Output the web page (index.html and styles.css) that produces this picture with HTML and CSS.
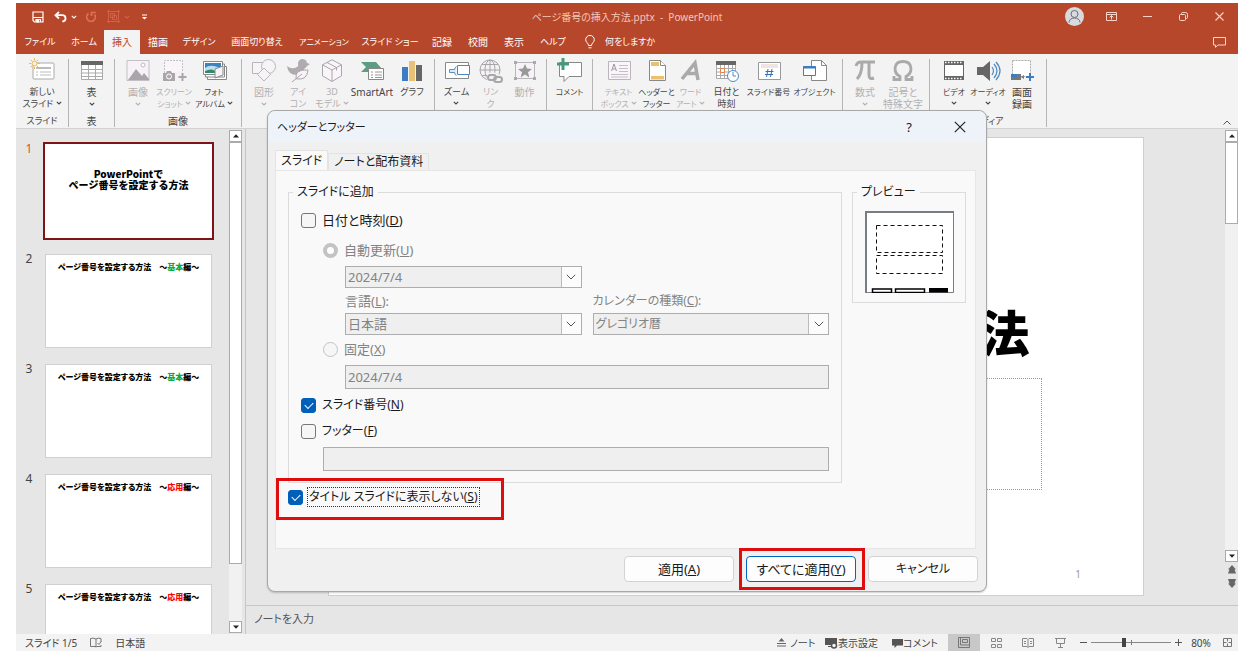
FILE: index.html
```html
<!DOCTYPE html>
<html lang="ja">
<head>
<meta charset="utf-8">
<title>ページ番号の挿入方法.pptx - PowerPoint</title>
<link rel="stylesheet" href="styles.css">
</head>
<body>
<svg class="defs" aria-hidden="true">
  <symbol id="chev" viewBox="0 0 6 4"><path d="M.8.8 3 3 5.2.8" fill="none" stroke="currentColor" stroke-width="1.1"/></symbol>
  <symbol id="drop" viewBox="0 0 10 6"><path d="M.8.8 5 5 9.200.8" fill="none" stroke="currentColor"/></symbol>
  <symbol id="up" viewBox="0 0 6 4"><path d="M0 3.500 3 .3l3 3.200z" fill="currentColor"/></symbol>
  <symbol id="down" viewBox="0 0 6 4"><path d="M0 .5 3 3.700 6 .5z" fill="currentColor"/></symbol>
</svg>
<div class="app">
  <header class="titlebar">
    <div class="quick">
      <button aria-label="上書き保存"><svg width="12" height="12" viewBox="0 0 12 12" fill="none" stroke="#fff" stroke-width="1.2"><path d="M1 1h10v10H2.500L1 9.500z"/><path d="M1 6.500h10M4 11V8.500h4.500V11" /><path d="M5 9h1.500v2H5z" fill="#fff"/></svg></button>
      <button aria-label="元に戻す"><svg width="13" height="12" viewBox="0 0 13 12" fill="none" stroke="#fff" stroke-width="1.800"><path d="M5 1 1.500 4.200 5 7.500M2 4.200h6.200c4.400 0 4.400 5.800.2 6.300"/></svg></button>
      <svg class="chev q-chev" width="6" height="4"><use href="#chev"/></svg>
      <button aria-label="繰り返し"><svg width="12" height="12" viewBox="0 0 12 12" fill="none" stroke="#e0705a" stroke-width="1.700"><path d="M3.500 2.500A4.300 4.300 0 1 0 9.500 3.500M6.500 5V1.500H10.800"/></svg></button>
      <button aria-label="グループ化"><svg width="13" height="13" viewBox="0 0 13 13" fill="none" stroke="#d4604a"><path d="M3.500 3.500h4v4h-4zM5.500 5.500h4v4h-4z"/><path d="M1.500 0v13M11.500 0v13M0 1.500h13M0 11.500h13"/></svg></button>
      <svg class="chev q-dim" width="6" height="4"><use href="#chev"/></svg>
      <button aria-label="クイック アクセス ツール バーのユーザー設定"><svg width="5" height="6" viewBox="0 0 5 6"><path d="M0 .5h5v1H0zM0 3h5L2.500 5.500z" fill="#fff"/></svg></button>
    </div>
    <h1 class="doc-title">ページ番号の挿入方法.pptx&nbsp; -&nbsp; PowerPoint</h1>
    <div class="window-btns">
      <span class="avatar"><svg width="19" height="19" viewBox="0 0 19 19" fill="none" stroke="#666d78"><circle cx="9.500" cy="9.500" r="9.500" fill="#d9dadd" stroke="none"/><circle cx="9.500" cy="7" r="3.500"/><path d="M4 15.500c0-6 11-6 11 0"/></svg></span>
      <button aria-label="リボンの表示オプション"><svg width="11" height="9" viewBox="0 0 11 9" fill="none" stroke="#fbd3c8"><path d="M.5.5h10v8H.5zM.5 2.500h10M5.500 7.500v-4M3.500 5.500l2-2 2 2"/></svg></button>
      <button aria-label="最小化"><svg width="9" height="9" viewBox="0 0 9 9" stroke="#fbd3c8"><path d="M0 4.500h9"/></svg></button>
      <button aria-label="元のサイズに戻す"><svg width="9" height="9" viewBox="0 0 9 9" fill="none" stroke="#fbd3c8"><rect x=".5" y="2.500" width="6" height="6" rx="1"/><path d="M2.500 2.500V1.500q0-1 1-1h3q2 0 2 2v3q0 1-1 1h-1"/></svg></button>
      <button aria-label="閉じる"><svg width="9" height="9" viewBox="0 0 9 9" stroke="#fbd3c8" stroke-width="1.100"><path d="M.5.5l8 8M8.500.5l-8 8"/></svg></button>
    </div>
  </header>
  <nav class="tabs">
    <button class="w48 kana">ファイル</button><button class="w40 kana">ホーム</button><button class="w36 active">挿入</button><button class="w36">描画</button><button class="w46 kana">デザイン</button><button class="w70 kana">画面切り替え</button><button class="w64 compact">アニメーション</button><button class="w68 compact">スライド ショー</button><button class="w36">記録</button><button class="w36">校閲</button><button class="w36">表示</button><button class="w42 kana">ヘルプ</button>
    <button class="tell kana"><svg width="10" height="14" viewBox="0 0 10 14" fill="none" stroke="#fff"><path d="M3.500 10.500C3.500 8 .7 7.500.7 4.700a4.300 4.300 0 0 1 8.600 0C9.300 7.500 6.500 8 6.500 10.500zM3.500 12.800h3"/></svg>何をしますか</button>
    <button class="comments" aria-label="コメント"><svg width="13" height="11" viewBox="0 0 13 11" fill="none" stroke="#fbd3c8"><path d="M.5.5h12v7.500H5L2.500 10.300V8h-2z"/></svg></button>
  </nav>
  <section class="ribbon">
    <div class="group g52">
      <div class="tools">
        <button class="tool w48 kana"><svg viewBox="0 0 24 24"><rect x="3" y="4" width="21" height="16" rx="1" fill="#fff" stroke="#aaa"/><path d="M6 8h15v2H6z" fill="#bbb"/><path d="M6 13h2M10 13h11M6 16h2M10 16h11" stroke="#bbb"/><circle cx="4.500" cy="4.500" r="2.500" fill="#fff3d4" stroke="#eab65a"/><path d="M4.500-1v2M4.500 8v2M-1 4.500h2M8 4.500h2M.8.8l1.200 1.200M7 7l1.200 1.200M.8 8.200 2 7M7 2 8.200.8" stroke="#eab65a"/></svg><span>新しい<br>スライド <svg class="chev" width="6" height="4"><use href="#chev"/></svg></span></button>
      </div><p class="kana">スライド</p>
    </div>
    <div class="group g46">
      <div class="tools">
        <button class="tool w40"><svg viewBox="0 0 24 24"><path d="M1.500 2.500h21v18h-21z" fill="#fff" stroke="#aaa"/><path d="M1 2h22v4H1z" fill="#666"/><path d="M1.500 10.500h21M1.500 14h21M1.500 17.500h21M8.500 6v15M15.500 6v15" stroke="#aaa"/></svg><span>表<br><svg class="chev" width="6" height="4"><use href="#chev"/></svg></span></button>
      </div><p>表</p>
    </div>
    <div class="group g127">
      <div class="tools">
        <button class="tool w34 off" disabled><svg viewBox="0 0 24 24"><path d="M1 1.500h22v20H1z" fill="#f7f2f7" stroke="#c5bfc5"/><path d="M2 21l8-11 6 7 2-3 5 6v1z" fill="#aaa5aa"/><circle cx="17" cy="6" r="2" fill="#fff" stroke="#bbb"/></svg><span>画像<br><svg class="chev" width="6" height="4"><use href="#chev"/></svg></span></button>
        <button class="tool w38 compact off" disabled><svg viewBox="0 0 24 24"><path d="M2.500 14V1.500h18V12" fill="#f9f5f9" stroke="#c5bfc5" stroke-dasharray="2 1"/><path d="M1 14h3l1-2h4l1 2h3v8H1z" fill="#aaa5aa"/><circle cx="7" cy="17.500" r="2.500" fill="#aaa" stroke="#fff"/><path d="M20.500 14v8M16.500 18h8" stroke="#aaa5aa" stroke-width="2"/></svg><span>スクリーン<br>ショット <svg class="chev" width="6" height="4"><use href="#chev"/></svg></span></button>
        <button class="tool w42 compact"><svg viewBox="0 0 24 24"><path d="M5.500 7.500h19v13h-19z" fill="#fff" stroke="#888"/><path d="M3.500 5h19v13h-19z" fill="#fff" stroke="#888"/><path d="M1.500 2.500h19v13h-19z" fill="#fff" stroke="#888"/><path d="M3 4h16v9H3z" fill="#3c83c4"/><path d="M3 9q6-5 16 1v4H3z" fill="#bfe0ea"/><path d="M3 12q8-4 12 2H3z" fill="#328a6e"/><path d="M13 19V10l8-3v9z" fill="#f5f5f5" stroke="#888"/></svg><span>フォト<br>アルバム <svg class="chev" width="6" height="4"><use href="#chev"/></svg></span></button>
      </div><p>画像</p>
    </div>
    <div class="group g193">
      <div class="tools">
        <button class="tool w34 off" disabled><svg viewBox="0 0 24 24" fill="#f7f4f7" stroke="#bbb5bb"><path d="M.5 3.500h12v11H.5z"/><circle cx="16.500" cy="7.500" r="7"/><path d="m12 9 6.500 6.500L12 22l-6.500-6.500z"/></svg><span>図形<br><svg class="chev" width="6" height="4"><use href="#chev"/></svg></span></button>
        <button class="tool w34 kana off" disabled><svg viewBox="0 0 24 24"><path d="M12 5a4.500 4.500 0 0 1 9-1l3 1-3 2q-1 2-3 3 1 6-7 6Q2 16 1 7q5 4 10 1 2-1 1-3" fill="#b0abb0"/><path d="M10 19q-1-9 12-8-1 10-10 9-3-.3-2-1z" fill="#f7f4f7" stroke="#aaa5aa"/><path d="m6 23 10-8" stroke="#aaa5aa" fill="none"/></svg><span>アイ<br>コン</span></button>
        <button class="tool w34 kana off" disabled><svg viewBox="0 0 24 24" fill="#f9f5f9" stroke="#aaa5aa"><path d="m12 .8 9.500 5v11L12 22.500l-9.500-5.700v-11z"/><path d="M2.500 5.800 12 11l9.500-5.200M12 11v11.500" fill="none"/><path d="m7 3.500 9.500 5v3" fill="none"/></svg><span>3D<br>モデル <svg class="chev" width="6" height="4"><use href="#chev"/></svg></span></button>
        <button class="tool w46"><svg viewBox="0 0 24 24"><path d="M1 3h15l6 7-2 3H1l5-5z" fill="#5d9d82"/><path d="M8.500 9.500h15v11h-15z" fill="#fff" stroke="#888"/><path d="M11 13h2M15 13h7M11 16h2M15 16h7M11 18.500h2M15 18.500h7" stroke="#999"/></svg><span>SmartArt</span></button>
        <button class="tool w34 kana"><svg viewBox="0 0 24 24"><path d="M2 8h6v14H2z" fill="#3c7cc0"/><path d="M9 2h6v20H9z" fill="#e9c176"/><path d="M16 6h6v16h-6z" fill="#666"/></svg><span>グラフ</span></button>
      </div><p></p>
    </div>
    <div class="group g112">
      <div class="tools">
        <button class="tool w34 kana"><svg viewBox="0 0 24 24"><path d="M.5 3.500h23v16H.5z" fill="#fff" stroke="#888"/><path d="M11.500 7.500q-2 1-2 3h-5v3h5q0 2 2 3" fill="#dceaf7" stroke="#5c8fc0"/><path d="M12.500 6.500h12v9h-12z" fill="#fff" stroke="#4b87c5"/></svg><span>ズーム<br><svg class="chev" width="6" height="4"><use href="#chev"/></svg></span></button>
        <button class="tool w34 kana off" disabled><svg viewBox="0 0 24 24" fill="none" stroke="#aaa5aa"><circle cx="11" cy="11" r="10"/><ellipse cx="11" cy="11" rx="5" ry="10"/><path d="M1 11h20M3 5.500h16M3 16.500h16M11 1v20"/><g stroke="#f3f3f3" stroke-width="5"><rect x="10" y="16" width="7" height="5" rx="2.500"/><rect x="17" y="18" width="7" height="5" rx="2.500"/></g><g stroke-width="2"><rect x="9" y="16" width="8" height="5" rx="2.500"/><rect x="15" y="18" width="8" height="5" rx="2.500"/></g></svg><span>リン<br>ク</span></button>
        <button class="tool w34 off" disabled><svg viewBox="0 0 24 24"><path d="M2.500 3.500h19v16h-19z" fill="#f7f2f7" stroke="#bbb5bb"/><path d="M1 2h3v3H1zM20 2h3v3h-3zM1 18h3v3H1zM20 18h3v3h-3z" fill="#aaa"/><path d="m12 5 2 4.500 5 .5-4 3.200 1.300 5.300L12 15.500l-4.300 3L9 13.200 5 10l5-.5z" fill="#999"/></svg><span>動作</span></button>
      </div><p></p>
    </div>
    <div class="group g46">
      <div class="tools">
        <button class="tool w40 compact"><svg viewBox="0 0 24 24"><path d="M1.500 3.500h22v14H11l-5 5v-5H1.500z" fill="#fff" stroke="#888"/><path d="M5 -1v12M-1 5h12" stroke="#449b7b" stroke-width="3"/></svg><span>コメント</span></button>
      </div><p></p>
    </div>
    <div class="group g250">
      <div class="tools">
        <button class="tool w42 compact off" disabled><svg viewBox="0 0 24 24"><path d="M1.500 2.500h22v18h-22z" fill="#f9f5f9" stroke="#bbb5bb"/><path d="m4.500 12 2.500-7 2.500 7M5.500 10h3" fill="none" stroke="#999"/><path d="M12 6.500h9M12 9.500h9M12 12.500h9M4 15.500h17M4 18h17" stroke="#c5bfc5"/></svg><span>テキスト<br>ボックス <svg class="chev" width="6" height="4"><use href="#chev"/></svg></span></button>
        <button class="tool w34 compact"><svg viewBox="0 0 24 24"><path d="M4.500 1.500h11l5 5v15h-16z" fill="#fff" stroke="#888"/><path d="M6 3h8v4H6zM6 17h13v3.500H6z" fill="#edc06e"/><path d="M15.500 1.500v5h5" fill="#fff" stroke="#888"/></svg><span>ヘッダーと<br>フッター</span></button>
        <button class="tool w34 compact off" disabled><svg viewBox="0 0 24 24" fill="none" stroke="#aaa"><path d="M3 20 16 4l3 17M8 14.500h9.500" stroke-width="3.500"/></svg><span>ワード<br>アート <svg class="chev" width="6" height="4"><use href="#chev"/></svg></span></button>
        <button class="tool w38 kana"><svg viewBox="0 0 24 24"><path d="M1.500 2.500h19v17h-19z" fill="#fff" stroke="#aaa"/><path d="M1 2h20v4H1z" fill="#666"/><path d="M1.500 9.500h19M1.500 13h19M1.500 16.500h19M5.500 6v13M9.500 6v13M13.500 6v13M17.500 6v13" stroke="#aaa"/><path d="M5.500 9.500h4v4h-4z" fill="#fff" stroke="#e5824b"/><circle cx="18" cy="17" r="5.500" fill="#fff" stroke="#4f8bc5"/><path d="M18 13v4h3" fill="none" stroke="#4f8bc5"/></svg><span>日付と<br>時刻</span></button>
        <button class="tool w46 compact"><svg viewBox="0 0 24 24"><path d="M1.500 3.500h22v17h-22z" fill="#fff" stroke="#999"/><path d="M4 6h17M4 8h17" stroke="#ddc9c2"/><path d="m11 10-1.500 8M15 10l-1.500 8M8.500 12.500h8M8 15.500h8" stroke="#2f72b8" fill="none"/></svg><span>スライド番号</span></button>
        <button class="tool w46 compact"><svg viewBox="0 0 24 24"><path d="M8.500 1.500h10l5 5v15h-15z" fill="#fff" stroke="#888"/><path d="M18.500 1.500v5h5" fill="none" stroke="#888"/><path d="M.5 7.500h12v9H.5z" fill="#fff" stroke="#3c7cc0"/><path d="M.5 7h12v2.500H.5z" fill="#3c7cc0"/></svg><span>オブジェクト</span></button>
      </div><p></p>
    </div>
    <div class="group g87">
      <div class="tools">
        <button class="tool w34 off" disabled><svg viewBox="0 0 24 24" fill="none" stroke="#aaa"><path d="M3 7q1-4 5-4h14" stroke-width="3"/><path d="M9 4q0 11-5 16M16 4v12q0 5 5 3" stroke-width="3"/></svg><span>数式<br><svg class="chev" width="6" height="4"><use href="#chev"/></svg></span></button>
        <button class="tool w42 off" disabled><svg viewBox="0 0 24 24" fill="none" stroke="#aaa"><path d="M3 17v3.500h6v-3C2 14 2 2.500 12 2.500s10 11.500 3 15v3h6V17" stroke-width="2.800"/></svg><span>記号と<br>特殊文字</span></button>
      </div><p></p>
    </div>
    <div class="group g117">
      <div class="tools">
        <button class="tool w34 compact"><svg viewBox="0 0 24 24"><path d="M2 2h20v19H2z" fill="#666"/><path d="M3 6h18v11H3z" fill="#fff"/><path d="M3 3.500h18M3 19.500h18" stroke="#fff" stroke-width="1.500" stroke-dasharray="1.500 1.500"/></svg><span>ビデオ<br><svg class="chev" width="6" height="4"><use href="#chev"/></svg></span></button>
        <button class="tool w34 compact"><svg viewBox="0 0 24 24"><path d="M1 8h6l7-6v20l-7-6H1z" fill="#666"/><path d="M16 8q3 4 0 8M18 5q6 7 0 14M20 3q8 9 0 18" fill="none" stroke="#4f8bc5" stroke-width="1.200"/></svg><span>オーディオ<br><svg class="chev" width="6" height="4"><use href="#chev"/></svg></span></button>
        <button class="tool w34"><svg viewBox="0 0 24 24"><path d="M2.500 1.500h18v16h-18z" fill="#fff" stroke="#aaa" stroke-dasharray="2 1"/><path d="M1 15h10v6H1z" fill="#777"/><path d="M1 15h6v3H1z" fill="#3c7cc0"/><path d="m11 18 3-2v4z" fill="#777"/><path d="M20 14v8M16 18h8" stroke="#3c7cc0" stroke-width="2"/></svg><span>画面<br>録画</span></button>
      </div><p class="kana">メディア</p>
    </div>
    <button class="collapse" aria-label="リボンを折りたたむ"><svg width="8" height="5" viewBox="0 0 8 5" fill="none" stroke="#555"><path d="m.5 4.500 3.500-3.500 3.500 3.500"/></svg></button>
  </section>
  <main class="work">
    <aside class="thumbs">
      <ol>
        <li class="current"><span>1</span><div class="thumb first">PowerPointで<br>ページ番号を設定する方法</div></li>
        <li><span>2</span><div class="thumb">ページ番号を設定する方法　～<b class="green">基本</b>編～</div></li>
        <li><span>3</span><div class="thumb">ページ番号を設定する方法　～<b class="green">基本</b>編～</div></li>
        <li><span>4</span><div class="thumb">ページ番号を設定する方法　～<b class="red">応用</b>編～</div></li>
        <li><span>5</span><div class="thumb">ページ番号を設定する方法　～<b class="red">応用</b>編～</div></li>
      </ol>
      <div class="scroll">
        <button aria-label="上へ"><svg width="6" height="4"><use href="#up"/></svg></button>
        <div class="track"><div class="grip long"></div></div>
        <button aria-label="下へ"><svg width="6" height="4"><use href="#down"/></svg></button>
      </div>
    </aside>
    <section class="editor">
      <div class="stage">
        <div class="canvas">
          <article class="slide">
            <h2>PowerPointで<br>ページ番号を設定する方法</h2>
            <div class="subtitle"></div>
            <span class="page-no">1</span>
          </article>
        </div>
        <div class="scroll right">
          <button aria-label="上へ"><svg width="6" height="4"><use href="#up"/></svg></button>
          <div class="track"><div class="grip"></div></div>
          <button aria-label="下へ"><svg width="6" height="4"><use href="#down"/></svg></button>
          <div class="jump">
            <svg width="8" height="10" viewBox="0 0 8 10"><path d="m4 0 4 4.500H6.500L8 8.500H0l1.500-4H0z" fill="#666"/></svg>
            <svg width="8" height="10" viewBox="0 0 8 10"><path d="m4 10 4-4.500H6.500L8 1H0l1.500 4.500H0z" fill="#666"/></svg>
          </div>
        </div>
      </div>
      <div class="notes">ノートを入力</div>
    </section>
  </main>
  <footer class="status">
    <span>スライド 1/5</span>
    <svg width="12" height="11" viewBox="0 0 12 11" fill="none" stroke="#777"><path d="M6 2v8.500M6 2Q3 .5.5 1.500v8H6M6 2q2-1.500 5-.5v3M6.500 9.500H11V8M7.500 6 9 7.500 11.500 4"/></svg>
    <span>日本語</span>
    <div class="status-right">
      <button class="s-note"><svg width="9" height="9" viewBox="0 0 9 9"><path d="M0 5.500h9M0 8h9" stroke="#666"/><path d="m4.500 0 3 3.500h-6z" fill="#666"/></svg>ノート</button>
      <button class="s-view"><svg width="13" height="12" viewBox="0 0 13 12"><path d="M0 1h12v7H0zM3 9h4v1H3z" fill="#555"/><circle cx="9" cy="8.500" r="2.500" fill="#f3f3f3" stroke="#555" stroke-width="1.500"/></svg>表示設定</button>
      <button class="s-comment"><svg width="11" height="10" viewBox="0 0 11 10"><path d="M0 1h11v6.500H5L2.500 10V7.500H0z" fill="#555"/></svg>コメント</button>
      <button class="mode on" aria-label="標準"><svg width="12" height="11" viewBox="0 0 12 11" fill="none" stroke="#777"><path d="M.5.5h11v10H.5zM2.500.5v7.500h9M4.500 2.500h5v3h-5z"/></svg></button>
      <button class="mode" aria-label="スライド一覧"><svg width="11" height="10" viewBox="0 0 11 10" fill="none" stroke="#888"><path d="M.5.5h4v3h-4zM6.500.5h4v3h-4zM.5 6.500h4v3h-4zM6.500 6.500h4v3h-4z"/></svg></button>
      <button class="mode" aria-label="閲覧表示"><svg width="12" height="10" viewBox="0 0 12 10" fill="none" stroke="#888"><path d="M.5.5H5l1 1 1-1h4.500v8H7l-1 1-1-1H.5zM6 1.500v8M2 3.500h2M2 5.500h2M8 3.500h2M8 5.500h2"/></svg></button>
      <button class="mode" aria-label="スライド ショー"><svg width="11" height="10" viewBox="0 0 11 10" fill="none" stroke="#888"><path d="M0 .5h11M1.500 1v4.500h8V1M5.500 5.500v4M3 9.500h5"/></svg></button>
      <button class="zbtn" aria-label="縮小"><svg width="7" height="7" viewBox="0 0 7 7" stroke="#555"><path d="M0 3.500h7"/></svg></button>
      <input class="zoom" type="range" min="10" max="184" value="80" aria-label="ズーム">
      <button class="zbtn" aria-label="拡大"><svg width="7" height="7" viewBox="0 0 7 7" stroke="#555"><path d="M0 3.500h7M3.500 0v7"/></svg></button>
      <span class="pct">80%</span>
      <button class="fit" aria-label="ウィンドウに合わせる"><svg width="9" height="9" viewBox="0 0 9 9" fill="none" stroke="#777"><path d="M.5.5h8v8h-8z"/><path d="M4.500 1v2.500M4.500 5.500V8M1 4.500h2.500M5.500 4.500H8"/></svg></button>
    </div>
  </footer>
</div>

<div class="dialog" role="dialog" aria-labelledby="dlg-title">
  <header>
    <h2 id="dlg-title">ヘッダーとフッター</h2>
    <button aria-label="ヘルプ">?</button>
    <button aria-label="閉じる"><svg width="12" height="12" viewBox="0 0 12 12" stroke="#222" stroke-width="1.200"><path d="m.8.8 10.400 10.400M11.200.8.8 11.200"/></svg></button>
  </header>
  <div class="dlg-tabs"><button class="active">スライド</button><button>ノートと配布資料</button></div>
  <div class="panel">
    <div class="cols">
      <fieldset class="add">
        <legend>スライドに追加</legend>
        <label class="row r1"><input type="checkbox"><span>日付と時刻(<u>D</u>)</span></label>
        <label class="row radio"><input type="radio" name="date" disabled checked><span>自動更新(<u>U</u>)</span></label>
        <div class="pair">
          <div class="combo"><select disabled aria-label="日付"><option>2024/7/4</option></select><i><svg width="10" height="6"><use href="#drop"/></svg></i></div>
        </div>
        <div class="pair labels"><label for="lang">言語(<u>L</u>):</label><label class="soft" for="cal">カレンダーの種類(<u>C</u>):</label></div>
        <div class="pair">
          <div class="combo"><select id="lang" disabled><option>日本語</option></select><i><svg width="10" height="6"><use href="#drop"/></svg></i></div>
          <div class="combo"><select id="cal" class="soft" disabled><option>グレゴリオ暦</option></select><i><svg width="10" height="6"><use href="#drop"/></svg></i></div>
        </div>
        <label class="row radio fixed"><input type="radio" name="date" disabled><span>固定(<u>X</u>)</span></label>
        <input class="text deep" type="text" value="2024/7/4" disabled aria-label="固定の日付">
        <label class="row soft"><input type="checkbox" checked><span>スライド番号(<u>N</u>)</span></label>
        <label class="row soft"><input type="checkbox"><span>フッター(<u>F</u>)</span></label>
        <input class="text" type="text" disabled aria-label="フッターのテキスト">
      </fieldset>
      <fieldset class="preview">
        <legend>プレビュー</legend>
        <svg width="89" height="82" viewBox="0 0 89 82"><path d="M.5.5h88v81H.5z" fill="#fff" stroke="#777c85"/><path d="M0 1h89M1 0v82" stroke="#777c85" stroke-width="2"/><path d="M11.500 14.500h66v27h-66zM11.500 44.500h66v18h-66z" fill="none" stroke="#111" stroke-dasharray="4 3"/><path d="M7.500 78h19v3.500h-19zM30.500 78h29v3.500h-29z" fill="#fff" stroke="#000" stroke-width="1.500"/><path d="M64 77h19v4.500H64z"/></svg>
      </fieldset>
    </div>
    <label class="row hide-title soft"><input type="checkbox" checked><span>タイトル スライドに表示しない(<u>S</u>)</span></label>
  </div>
  <div class="actions">
    <button>適用(<u>A</u>)</button><button class="primary">すべてに適用(<u>Y</u>)</button><button class="soft">キャンセル</button>
  </div>
  <div class="mark mark-check"></div>
  <div class="mark mark-apply"></div>
</div>
</body>
</html>
```

FILE: styles.css
```css
* { box-sizing: border-box; }
html, body { height: 100%; }
body {
  margin: 0;
  padding: 3px 18px 7px 16px;
  background: #fff;
  color: #444;
  font: 10px/12px "Noto Sans", "Noto Sans CJK JP", sans-serif;
  font-feature-settings: "palt";
  overflow: hidden;
}
button, input, select { font: inherit; font-feature-settings: inherit; color: inherit; }
button { border: 0; padding: 0; background: none; white-space: nowrap; }
h1, h2, p, ol { margin: 0; padding: 0; font-weight: normal; font-size: inherit; }
svg { flex: none; }
.defs { position: absolute; width: 0; height: 0; }
.kana { font-size: 9px; }
.compact { font-size: 8px; }

.app { display: flex; flex-direction: column; height: 100%; background: #e6e6e6; }

/* Title bar */
.titlebar { display: grid; grid-template-columns: 1fr auto 1fr; align-items: center; height: 27px; background: #b7472a; color: #f6c6b8; }
.quick { display: flex; align-items: center; padding-left: 16px; color: #fff; }
.quick button { display: flex; margin-right: 10px; }
.quick button:nth-of-type(2), .quick button:nth-of-type(4) { margin-right: 4px; }
.q-chev { margin-right: 8px; }
.q-dim { margin-right: 12px; color: #d4604a; }
.doc-title { font-size: 10px; }
.window-btns { display: flex; align-items: center; justify-content: flex-end; padding-right: 1px; }
.window-btns button { display: flex; justify-content: center; width: 36px; }
.avatar { display: flex; margin-right: 9px; }

/* Ribbon tabs */
.tabs { display: flex; height: 24px; background: #b7472a; color: #fff; }
.tabs .active { background: #f3f3f3; color: #b7472a; }
.tabs .compact { font-size: 9px; }
.tabs .w64 { font-size: 8px; }
.tabs .tell { display: flex; align-items: center; gap: 10px; padding-left: 11px; }
.tabs .comments { display: flex; align-items: center; margin-left: auto; padding-right: 12px; }

.w34 { width: 34px; }
.w36 { width: 36px; }
.w38 { width: 38px; }
.w40 { width: 40px; }
.w42 { width: 42px; }
.w46 { width: 46px; }
.w48 { width: 48px; }
.w64 { width: 64px; }
.w68 { width: 68px; }
.w70 { width: 70px; }

/* Ribbon */
.ribbon { display: flex; height: 75px; background: #f3f3f3; border-bottom: 1px solid #d2d2d2; padding: 5px 0 1px; }
.group { display: flex; flex-direction: column; align-items: center; border-right: 1px solid #b5b5b5; }
.group p { margin-top: auto; line-height: 12px; }
.g46 { width: 46px; }
.g52 { width: 53px; }
.g87 { width: 87px; }
.g112 { width: 112px; }
.g117 { width: 117px; }
.g127 { width: 127px; }
.g193 { width: 193px; }
.g250 { width: 250px; }
.tools { display: flex; }
.tool { display: flex; flex-direction: column; align-items: center; gap: 3px; line-height: 12px; }
.tool > svg { width: 24px; height: 24px; overflow: visible; }
.tool .chev { vertical-align: 2px; }
.off { color: #b3afb1; }
.collapse { display: flex; align-items: flex-end; margin-left: auto; padding: 0 7px 2px 0; }

/* Workspace */
.work { display: flex; flex: 1; min-height: 0; }
.thumbs { display: flex; width: 230px; padding-right: 3px; border-right: 1px solid #c6c6c6; }
.thumbs ol { flex: 1; list-style: none; overflow: hidden; padding: 13px 0 0 9px; }
.thumbs li { display: flex; gap: 10px; height: 110px; font-size: 12px; line-height: 14px; }
.thumbs li span { width: 8px; text-align: center; }
.current span { color: #d35230; }
.thumb { width: 171px; height: 98px; padding-top: 8px; border: 2px solid #e6e6e6; outline: 1px solid #d0d0d0; outline-offset: -3px; background: #fff; background-clip: padding-box; color: #000; font-family: "Noto Sans CJK JP", sans-serif; font-size: 8px; line-height: 10px; font-weight: 900; text-align: center; white-space: nowrap; }
.thumb.first { padding-top: 24px; border-color: #7e1416; outline: 0; font-size: 10px; font-feature-settings: normal; line-height: 11px; }
.green { color: #00b050; }
.red { color: #f00; }

.scroll { display: flex; flex-direction: column; width: 13px; padding: 1px 0; color: #222; }
.scroll button { display: flex; align-items: center; justify-content: center; height: 12px; border: 1px solid #aaa; background: #fff; }
.track { flex: 1; background: #f1f1f1; }
.grip { height: 82px; border: 1px solid #ababab; background: #fff; }
.grip.long { height: 88%; }
.jump { display: flex; flex-direction: column; align-items: center; gap: 3px; padding: 3px 0 16px; }

.editor { display: flex; flex: 1; flex-direction: column; min-width: 0; }
.stage { display: flex; flex: 1; min-height: 0; }
.canvas { display: flex; flex: 1; padding: 8px 81px 9px 82px; }
.slide { display: flex; flex: 1; flex-direction: column; align-items: center; border: 1px solid #cfcfcf; background: #fff; }
.slide h2 { margin-top: 109px; color: #000; font: 900 49px/56px "Noto Sans CJK JP", sans-serif; font-feature-settings: normal; text-align: center; white-space: nowrap; }
.subtitle { width: 612px; height: 112px; margin-top: 19px; border: 1px dotted #999; }
.page-no { align-self: flex-end; margin: 78px 62px 0 0; color: #999; }
.notes { padding: 6px 8px; height: 29px; border-top: 1px solid #c6c6c6; font-size: 11px; line-height: 14px; color: #555; }

/* Status bar */
.status { display: flex; align-items: center; gap: 13px; height: 17px; padding-left: 9px; background: #f3f3f3; }
.status-right { display: flex; align-items: center; align-self: stretch; margin-left: auto; }
.status-right button { display: flex; align-items: center; }
.s-note { gap: 4px; width: 48px; }
.status-right .s-view { width: 67px; }
.status-right .s-comment { width: 56px; }
.status-right .mode { justify-content: center; align-self: stretch; width: 32px; }
.status-right .on { background: #c8c8c8; }
.status-right .zbtn { justify-content: center; width: 15px; }
.zoom { appearance: none; width: 80px; height: 9px; margin: 0; background: linear-gradient(#888, #888) center / 100% 1px no-repeat, linear-gradient(#777, #777) center / 1px 5px no-repeat; }
.zoom::-webkit-slider-thumb { appearance: none; width: 4px; height: 9px; background: #444; }
.pct { width: 30px; text-align: center; }
.status-right .fit { width: 22px; justify-content: center; }

/* Dialog */
.dialog { position: absolute; left: 267px; top: 110px; width: 720px; border: 1px solid #a8a8a8; border-radius: 8px; background: #f0f0f0; box-shadow: 0 1px 2px rgba(0, 0, 0, .2); color: #1a1a1a; font-size: 13px; line-height: 18px; }
.soft { font-size: 12px; }
.dialog header { display: flex; align-items: center; height: 31px; padding: 0 12px 0 9px; border-radius: 8px 8px 0 0; background: #eef3f9; }
.dialog h2 { flex: 1; font-size: 11px; }
.dialog header button { display: flex; justify-content: center; width: 28px; margin-left: 23px; }
.dlg-tabs { display: flex; align-items: flex-end; height: 28px; padding-left: 7px; font-size: 12px; }
.dlg-tabs button { height: 17px; padding: 0 5px; border: 1px solid #e3e3e3; border-bottom: 0; line-height: 16px; }
.dlg-tabs .active { height: 20px; background: #f9f9f9; }
.panel { margin: 0 10px 0 7px; height: 379px; padding: 12px 9px 0 12px; border: 1px solid #e6e6e6; background: #f9f9f9; }
.cols { display: flex; align-items: flex-start; gap: 10px; }
fieldset { min-width: 0; margin: 0; border: 1px solid #dcdcdc; }
legend { height: 18px; padding: 0 4px; font-size: 12px; }
.add { display: flex; flex-direction: column; flex: 1; padding: 9px 12px 11px; gap: 6px; }
.add legend, .preview legend { margin-left: -8px; }
.row { display: flex; align-items: center; gap: 6px; height: 20px; }
.radio { padding-left: 22px; color: #838383; }
.r1 { margin-bottom: 4px; }
.row input { appearance: none; display: grid; place-items: center; width: 15px; height: 15px; margin: 0; border: 1px solid #777; border-radius: 3px; background: #f6f6f6; }
.row input[type="checkbox"]:checked { border-color: #005fb8; background: #005fb8; }
.row input[type="checkbox"]:checked::before { content: ""; width: 7px; height: 4px; margin-bottom: 2px; border: solid #fff; border-width: 0 0 1px 1px; transform: rotate(-45deg); }
.row input[type="radio"] { border-color: #c3c3c3; border-radius: 50%; }
.row input[type="radio"]:checked { border-width: 4px; background: #fff; }
.pair { display: grid; grid-template-columns: 1fr 1fr; gap: 11px; margin-left: 44px; color: #838383; }
.labels { height: 13px; line-height: 14px; }
.combo { display: grid; }
.combo select, .combo i { grid-area: 1 / 1; }
.combo select { appearance: none; width: 100%; height: 22px; padding: 0 2px; border: 1px solid #adadad; border-radius: 0; background: #efefef; color: #838383; opacity: 1; }
.combo i { display: flex; align-items: center; justify-content: center; justify-self: end; width: 20px; height: 20px; margin: 1px; border-left: 1px solid #bbb; background: #fcfcfc; color: #555; pointer-events: none; }
.fixed { margin-top: -2px; }
.text { height: 24px; margin-left: 22px; padding: 0 2px; border: 1px solid #adadad; background: #efefef; color: #838383; }
.deep { margin-left: 44px; }
.preview { width: 114px; padding: 10px 12px 9px; }
.preview svg { display: block; }
.hide-title { margin-top: 4px; gap: 5px; }
.hide-title span { outline: 1px dotted #333; padding: 0 1px; }
.actions { display: flex; justify-content: flex-end; gap: 12px; padding: 7px 8px 9px; }
.actions button { width: 110px; height: 26px; border: 1px solid #d3d3d3; border-radius: 4px; background: #fdfdfd; }
.actions .primary { border-color: #0067c0; }
.mark { position: absolute; border: 3px solid #df0d0d; }
.mark-check { left: 8px; top: 367px; width: 228px; height: 42px; }
.mark-apply { right: 121px; bottom: 1px; width: 126px; height: 42px; }
```
